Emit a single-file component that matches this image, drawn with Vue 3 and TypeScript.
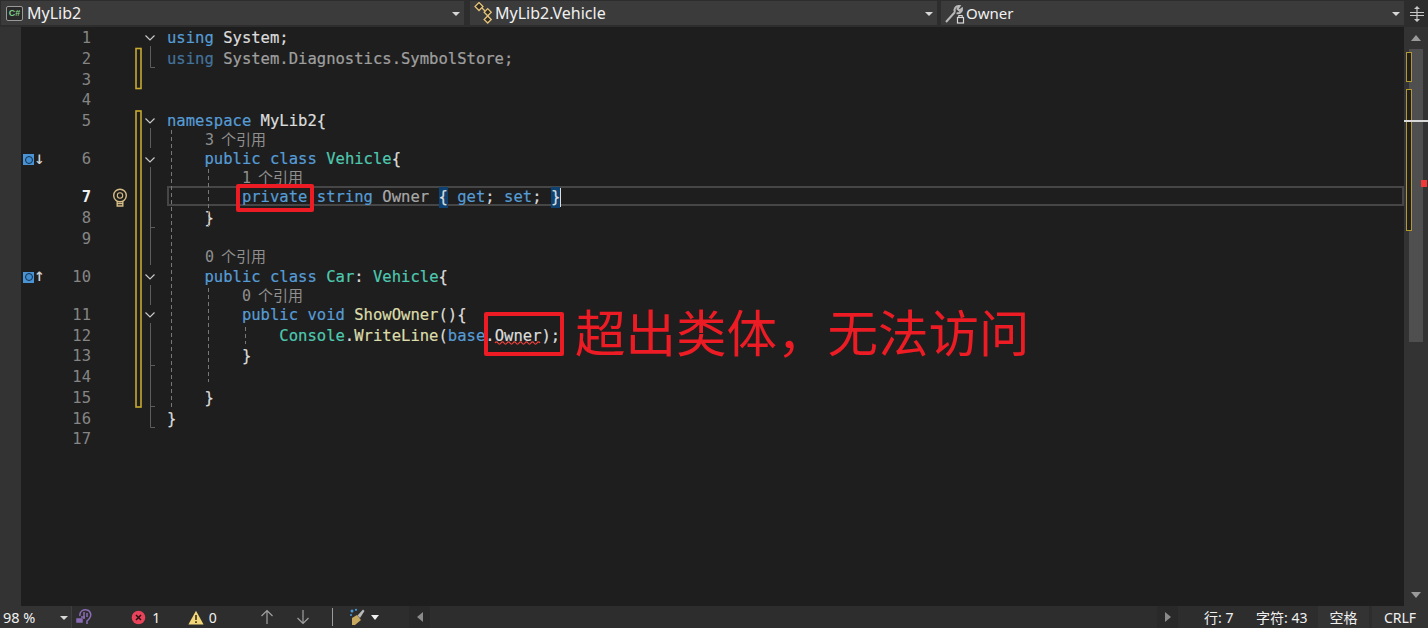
<script setup lang="ts">
type Tok = [string, string]
interface Line {
  n?: number
  lens?: string
  fold?: boolean
  mark?: 'down' | 'up'
  active?: boolean
  toks?: Tok[]
}
const lines: Line[] = [
  { n: 1, fold: true, toks: [['k', 'using'], ['p', ' System;']] },
  { n: 2, toks: [['k d', 'using'], ['p d', ' System.Diagnostics.SymbolStore;']] },
  { n: 3, toks: [] },
  { n: 4, toks: [] },
  { n: 5, fold: true, toks: [['k', 'namespace'], ['p', ' MyLib2{']] },
  { lens: '3 个引用' },
  { n: 6, fold: true, mark: 'down', toks: [['p', '    '], ['k', 'public class'], ['p', ' '], ['t', 'Vehicle'], ['p', '{']] },
  { lens: '1 个引用', },
  { n: 7, active: true, toks: [['p', '        '], ['k', 'private string'], ['p', ' '], ['g', 'Owner'], ['p', ' '], ['b', '{'], ['p', ' '], ['k', 'get'], ['p', '; '], ['k', 'set'], ['p', '; '], ['b', '}']] },
  { n: 8, toks: [['p', '    }']] },
  { n: 9, toks: [] },
  { lens: '0 个引用' },
  { n: 10, fold: true, mark: 'up', toks: [['p', '    '], ['k', 'public class'], ['p', ' '], ['t', 'Car'], ['p', ': '], ['t', 'Vehicle'], ['p', '{']] },
  { lens: '0 个引用', },
  { n: 11, fold: true, toks: [['p', '        '], ['k', 'public void'], ['p', ' '], ['m', 'ShowOwner'], ['p', '(){']] },
  { n: 12, toks: [['p', '            '], ['t', 'Console'], ['p', '.'], ['m', 'WriteLine'], ['p', '('], ['k', 'base'], ['p', '.'], ['e', 'Owner'], ['p', ');']] },
  { n: 13, toks: [['p', '        }']] },
  { n: 14, toks: [] },
  { n: 15, toks: [['p', '    }']] },
  { n: 16, toks: [['p', '}']] },
  { n: 17, toks: [] },
]
function lensIndent(i: number): string {
  return i === 5 || i === 11 ? 'lens-1' : 'lens-2'
}
</script>

<template>
  <div class="ide">
    <header class="nav">
      <div class="combo c1">
        <span class="cs-icon">C#</span>
        <span class="combo-text">MyLib2</span>
        <i class="caret"></i>
      </div>
      <div class="combo c2">
        <svg class="ic2" width="26" height="22" viewBox="0 0 26 22" fill="none" stroke="#e5c27a" stroke-width="1.3">
          <rect x="4.2" y="1.7" width="5.6" height="5.6" transform="rotate(45 7 4.5)" fill="#2f2a20" />
          <rect x="13.2" y="7.7" width="5" height="5" transform="rotate(45 15.7 10.2)" fill="#2f2a20" />
          <rect x="13.2" y="15" width="5" height="5" transform="rotate(45 15.7 17.5)" fill="#2f2a20" />
          <path d="M10 6 L13 9 M15.7 13 V15" />
        </svg>
        <span class="combo-text">MyLib2.Vehicle</span>
        <i class="caret"></i>
      </div>
      <div class="combo c3">
        <svg class="ic3" width="22" height="22" viewBox="0 0 22 22" fill="none">
          <path d="M2 20 L11 10 M11 10 C9.5 6.5 12 3.5 15.5 4 L13.5 6.8 L15.5 8.6 L18 6.6 C18.5 9.6 15.5 12 12.6 11" stroke="#b9b9b9" stroke-width="2" />
          <rect x="13.5" y="15.5" width="6" height="5.5" stroke="#d8d8d8" stroke-width="1.2" fill="#333" />
          <path d="M14.8 15.5 V13.5 H18.2 V15.5" stroke="#d8d8d8" stroke-width="1.1" />
        </svg>
        <span class="combo-text t3">Owner</span>
        <i class="caret"></i>
      </div>
      <div class="split">
        <svg width="16" height="18" viewBox="0 0 16 18" stroke="#c8c8c8" fill="#c8c8c8">
          <path d="M1 7.5 H15 M1 10.5 H15" stroke-width="1.2" fill="none" />
          <path d="M8 1 L11 4 H5 Z M8 17 L11 14 H5 Z" stroke="none" />
          <path d="M8 4 V14" stroke-width="1.2" fill="none" />
        </svg>
      </div>
    </header>

    <main class="editor">
      <div class="strip"></div>
      <div class="current-line"></div>
      <section class="lines">
        <div v-for="(l, i) in lines" :key="i" :class="l.lens ? 'lens-row' : 'row'">
          <template v-if="l.lens">
            <span class="lens" :class="lensIndent(i)">{{ l.lens }}</span>
          </template>
          <template v-else>
            <div class="glyph">
              <span v-if="l.mark" class="impl"><i class="impl-dot"></i></span>
              <span v-if="l.mark" class="impl-arrow">{{ l.mark === 'down' ? '↓' : '↑' }}</span>
            </div>
            <div class="num" :class="{ on: l.active }">{{ l.n }}</div>
            <div class="bulb-col">
              <svg v-if="l.active" width="16" height="20" viewBox="0 0 16 20" fill="none" stroke="#d6bd85" stroke-width="1.4">
                <circle cx="8" cy="7.5" r="6.3" />
                <circle cx="8" cy="7.5" r="2.7" stroke-width="1.1" />
                <path d="M5.2 13 V18 H10.8 V13 M5.2 15.5 H10.8" />
              </svg>
            </div>
            <div class="fold">
              <svg v-if="l.fold" width="12" height="8" viewBox="0 0 12 8" fill="none" stroke="#c8c8c8" stroke-width="1.2">
                <path d="M1.5 1.5 L6 6 L10.5 1.5" />
              </svg>
            </div>
            <div class="code"><span v-for="(t, j) in l.toks" :key="j" :class="t[0]">{{ t[1] }}</span><i v-if="l.active" class="cursor"></i></div>
          </template>
        </div>
      </section>

      <svg class="guides" width="1404" height="580" viewBox="0 26 1404 580" fill="none">
        <g stroke="#c9a92f" stroke-width="1.6">
          <rect x="136" y="48.5" width="5" height="40" />
          <rect x="136" y="111" width="5" height="296" />
        </g>
        <g stroke="#5c5c5c" stroke-width="1">
          <path d="M150.5 46 V67.5 H155" />
          <path d="M150.5 128 V148" />
          <path d="M150.5 167 V265" />
          <path d="M150.5 227.5 H155" />
          <path d="M150.5 285 V305" />
          <path d="M150.5 323 V427.5 H155" />
          <path d="M150.5 365.5 H155 M150.5 406.5 H155" />
        </g>
        <g stroke="#777" stroke-width="1" stroke-dasharray="4 3">
          <path d="M171.5 130 V407" />
          <path d="M208.5 169 V227" />
          <path d="M208.5 288 V382" />
          <path d="M245.5 327 V344" />
        </g>
        <path d="M495 343 q1.5 -2.4 3 0 t3 0 t3 0 t3 0 t3 0 t3 0 t3 0 t3 0 t3 0 t3 0 t3 0 t3 0 t3 0 t3 0 t3 0" stroke="#f0403a" stroke-width="1.2" />
      </svg>

      <div class="box box-a"></div>
      <div class="box box-b"></div>
      <div class="callout">超出类体，无法访问</div>

      <aside class="scrollbar">
        <div class="sb-btn"><i class="tri up"></i></div>
        <div class="sb-track">
          <div class="thumb"></div>
          <i class="mk mk1"></i>
          <i class="mk mk2"></i>
          <i class="caret-line"></i>
          <i class="err"></i>
        </div>
        <div class="sb-btn"><i class="tri down"></i></div>
      </aside>
    </main>

    <footer class="status">
      <div class="zoom"><span>98 %</span><i class="caret small"></i></div>
      <svg class="intelli" width="16" height="18" viewBox="0 0 16 18" fill="none" stroke="#8a6bb5" stroke-width="1.5">
        <path d="M4 8 C3 3 8 1 11 2 C15 3 16 8 13 11 L11 13 V16" />
        <path d="M8 4 V11 M11 5 V9 M5 9 H9" />
        <path d="M1 11 H6 V14 H1 Z" fill="#8a6bb5" />
      </svg>
      <div class="stat s-err">
        <svg width="15" height="15" viewBox="0 0 15 15">
          <circle cx="7.5" cy="7.5" r="6.8" fill="#e8435a" />
          <path d="M5 5 L10 10 M10 5 L5 10" stroke="#2a1010" stroke-width="1.5" />
        </svg>
        <span>1</span>
      </div>
      <div class="stat s-warn">
        <svg width="16" height="15" viewBox="0 0 16 15">
          <path d="M8 .8 L15.6 14.4 H.4 Z" fill="#f3d57a" />
          <path d="M8 5 V10 M8 11.2 V13" stroke="#2a2410" stroke-width="1.5" />
        </svg>
        <span>0</span>
      </div>
      <svg class="arrow a-up" width="14" height="16" viewBox="0 0 14 16" fill="none" stroke="#a0a0a0" stroke-width="1.2">
        <path d="M7 15 V2 M1.5 7 L7 1.5 L12.5 7" />
      </svg>
      <svg class="arrow a-down" width="14" height="16" viewBox="0 0 14 16" fill="none" stroke="#a0a0a0" stroke-width="1.2">
        <path d="M7 1 V14 M1.5 9 L7 14.5 L12.5 9" />
      </svg>
      <i class="sep"></i>
      <svg class="brush" width="18" height="18" viewBox="0 0 18 18">
        <path d="M3 10 L8 7 L12 12 L6 17 L3 17 Z" fill="#c9a860" />
        <path d="M8.5 7.5 L14 1.5 L15.5 3 L11 10" fill="#b9b9b9" />
        <circle cx="3" cy="3" r="1.5" fill="#4a9ad8" />
        <circle cx="7" cy="1.8" r="1.1" fill="#4a9ad8" />
        <circle cx="2" cy="7" r="1" fill="#4a9ad8" />
      </svg>
      <i class="caret white"></i>
      <div class="hscroll">
        <div class="hs-btn"><i class="tri left"></i></div>
        <div class="hs-btn"><i class="tri right"></i></div>
      </div>
      <div class="pos p-line">行: 7</div>
      <div class="pos p-char">字符: 43</div>
      <div class="cell c-space">空格</div>
      <div class="cell c-crlf">CRLF</div>
    </footer>
  </div>
</template>

<style>
html, body { margin: 0; background: #1e1e1e; overflow: hidden; }
</style>

<style scoped>
.ide {
  width: 1428px;
  height: 628px;
  display: flex;
  flex-direction: column;
  background: #1e1e1e;
  font-family: "Noto Sans", "Noto Sans CJK SC", sans-serif;
  overflow: hidden;
}
.nav {
  height: 27px;
  flex: none;
  display: flex;
  background: #2d2d2d;
  box-sizing: border-box;
  padding-top: 1px;
  color: #f0f0f0;
}
.combo {
  height: 24px;
  background: #3b3b3b;
  display: flex;
  align-items: center;
  position: relative;
}
.c1 { width: 463px; margin-left: 1px; padding-left: 5px; box-sizing: border-box; }
.c2 { width: 467px; margin-left: 6px; box-sizing: border-box; padding-left: 2px; }
.c3 { width: 463px; margin-left: 4px; box-sizing: border-box; padding-left: 3px; }
.combo-text { font-size: 16px; line-height: 24px; }
.combo-text.t3 { font-size: 15px; }
.cs-icon {
  width: 17px;
  height: 15px;
  box-sizing: border-box;
  border: 1px solid #9a9a9a;
  background: #2a2a2a;
  border-radius: 2px;
  color: #7fd08a;
  font: bold 9px/13px "Liberation Sans", sans-serif;
  text-align: center;
  margin-right: 4px;
}
.ic2 { margin-right: -3px; }
.caret {
  position: absolute;
  right: 4px;
  top: 11px;
  width: 0;
  height: 0;
  border-left: 4px solid transparent;
  border-right: 4px solid transparent;
  border-top: 4px solid #d8d8d8;
}
.split {
  flex: 1;
  margin-left: 1px;
  display: flex;
  align-items: center;
  justify-content: center;
  background: #2d2d2d;
}
.editor {
  flex: 1;
  min-height: 0;
  display: flex;
  position: relative;
}
.strip { width: 21px; flex: none; background: #333333; }
.lines { flex: 1; min-width: 0; padding-top: 1px; position: relative; z-index: 1; }
.row { height: 20.78px; display: flex; align-items: center; }
.lens-row { height: 17.3px; display: flex; align-items: center; }
.glyph { width: 22px; flex: none; padding-left: 2px; box-sizing: border-box; display: flex; align-items: center; }
.impl {
  width: 11px;
  height: 11px;
  background: #4a94d6;
  display: flex;
  align-items: center;
  justify-content: center;
}
.impl-dot { width: 8px; height: 8px; box-sizing: border-box; border: 1.5px solid #12304a; border-radius: 50%; background: #3f8ccf; }
.impl-arrow { color: #d0d0d0; font: bold 13px/14px "DejaVu Sans", sans-serif; width: 8px; }
.num {
  width: 48px;
  flex: none;
  text-align: right;
  color: #858585;
  font: 15.5px/20.7px "DejaVu Sans Mono", monospace;
}
.num.on { color: #f0f0f0; font-weight: bold; }
.bulb-col { width: 42px; padding-left: 8px; flex: none; display: flex; justify-content: center; }
.fold { width: 18px; flex: none; margin-right: 8px; display: flex; justify-content: center; }
.code {
  white-space: pre;
  font: 15.55px/20.7px "DejaVu Sans Mono", monospace;
  color: #dcdcdc;
  position: relative;
  display: flex;
  -webkit-text-stroke: 0.2px currentColor;
}
.k { color: #569cd6; }
.t { color: #4ec9b0; }
.m { color: #dcdcaa; }
.p { color: #dcdcdc; }
.g { color: #a8a8a8; }
.e { color: #dcdcdc; }
.b { color: #dcdcdc; background: #0e4272; }
.d { opacity: 0.68; }
.cursor { width: 1px; height: 19px; background: #dcdcdc; align-self: center; }
.lens {
  font: 15px/17.3px "DejaVu Sans Mono", "Noto Sans CJK SC", sans-serif;
  word-spacing: -2px;
  color: #8f8f8f;
  white-space: pre;
}
.lens-1 { margin-left: 184px; }
.lens-2 { margin-left: 221px; }
.current-line {
  position: absolute;
  left: 167px;
  top: 159px;
  height: 16px;
  border: 2px solid #464646;
  width: 1233px;
}
.guides { position: absolute; left: 0; top: -1px; pointer-events: none; z-index: 2; }
.box {
  position: absolute;
  border: 4px solid #ed1c24;
  border-radius: 2px;
  box-sizing: border-box;
  z-index: 2;
}
.box-a { left: 236px; top: 157px; width: 78px; height: 28px; }
.box-b { left: 484px; top: 285px; width: 80px; height: 44px; }
.callout {
  position: absolute;
  left: 575px;
  top: 268px;
  font: 400 50.5px/70px "Noto Sans CJK SC", sans-serif;
  color: #ed1c24;
  white-space: pre;
  z-index: 2;
}
.scrollbar {
  width: 24px;
  flex: none;
  background: #333333;
  display: flex;
  flex-direction: column;
  align-self: stretch;
  z-index: 1;
}
.sb-btn { height: 22px; flex: none; display: flex; align-items: center; justify-content: center; }
.sb-track { flex: 1; position: relative; }
.thumb { position: absolute; left: 5px; width: 14px; top: 0; height: 293px; background: #4f4f4f; }
.mk { position: absolute; left: 2px; width: 6px; box-sizing: border-box; border: 1px solid #b3992f; background: #1f1f1f; }
.mk1 { top: 3px; height: 30px; }
.mk2 { top: 40px; height: 142px; }
.caret-line { position: absolute; left: 0; right: 0; top: 71px; height: 2px; background: #d8d8d8; }
.err { position: absolute; left: 17px; top: 131px; width: 6px; height: 7px; background: #f03a3a; }
.tri { display: block; width: 0; height: 0; }
.tri.up { border-left: 5.5px solid transparent; border-right: 5.5px solid transparent; border-bottom: 6px solid #9a9a9a; }
.tri.down { border-left: 5.5px solid transparent; border-right: 5.5px solid transparent; border-top: 6px solid #9a9a9a; }
.tri.left { border-top: 5.5px solid transparent; border-bottom: 5.5px solid transparent; border-right: 6px solid #8a8a8a; }
.tri.right { border-top: 5.5px solid transparent; border-bottom: 5.5px solid transparent; border-left: 6px solid #8a8a8a; }
.status {
  height: 22px;
  flex: none;
  display: flex;
  align-items: center;
  background: #2d2d2d;
  color: #f0f0f0;
  font-size: 14px;
  position: relative;
}
.zoom {
  width: 74px;
  height: 22px;
  box-sizing: border-box;
  padding-left: 3px;
  background: #333333;
  border-right: 1px solid #3f3f3f;
  display: flex;
  align-items: center;
  position: relative;
  font-size: 14.5px;
}
.caret.small { right: 3px; top: 10px; }
.intelli { margin-left: 4px; flex: none; }
.stat { display: flex; align-items: center; gap: 6px; }
.s-err { margin-left: 39px; width: 58px; }
.s-warn { width: 74px; gap: 5px; }
.arrow { flex: none; }
.a-down { margin-left: 22px; }
.sep { width: 1px; height: 18px; background: #9a9a9a; margin-left: 22px; flex: none; }
.brush { margin-left: 16px; flex: none; }
.caret.white { position: static; margin-left: 4px; border-top-color: #f0f0f0; border-left-width: 4.5px; border-right-width: 4.5px; border-top-width: 5px; flex: none; }
.hscroll {
  width: 769px;
  margin-left: 30px;
  height: 22px;
  display: flex;
  justify-content: space-between;
  flex: none;
}
.hs-btn { width: 21px; background: #292929; display: flex; align-items: center; justify-content: center; }
.pos { font-size: 14px; white-space: pre; flex: none; }
.p-line { margin-left: 26px; width: 52px; }
.p-char { width: 62px; }
.cell {
  height: 22px;
  box-sizing: border-box;
  background: #333333;
  display: flex;
  align-items: center;
  justify-content: center;
  flex: none;
}
.c-space { width: 51px; }
.c-crlf { width: 56px; margin-left: 3px; }
</style>
